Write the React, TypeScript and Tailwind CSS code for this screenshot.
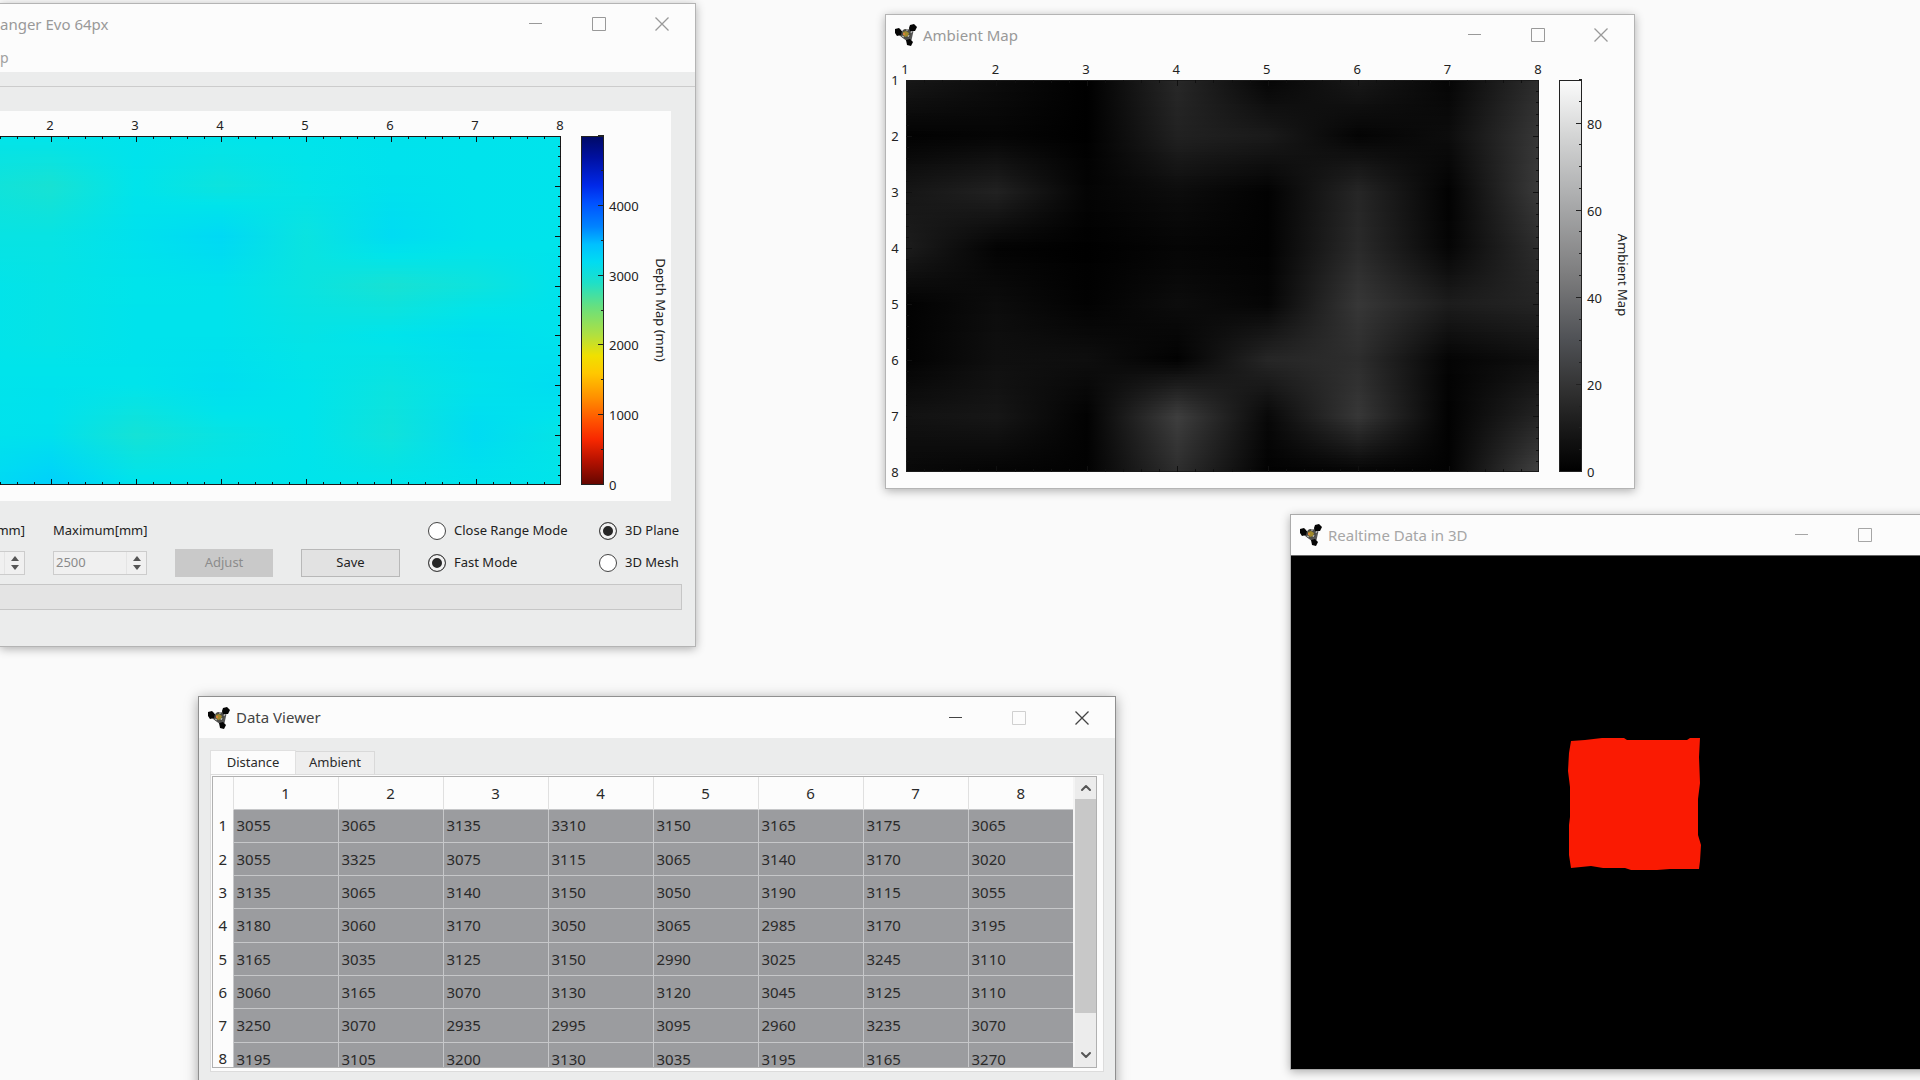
import React, { useState } from 'react';
import { ChevronDown, ChevronUp } from 'lucide-react';

const DISTANCES = [
  [3055, 3065, 3135, 3310, 3150, 3165, 3175, 3065],
  [3055, 3325, 3075, 3115, 3065, 3140, 3170, 3020],
  [3135, 3065, 3140, 3150, 3050, 3190, 3115, 3055],
  [3180, 3060, 3170, 3050, 3065, 2985, 3170, 3195],
  [3165, 3035, 3125, 3150, 2990, 3025, 3245, 3110],
  [3060, 3165, 3070, 3130, 3120, 3045, 3125, 3110],
  [3250, 3070, 2935, 2995, 3095, 2960, 3235, 3070],
  [3195, 3105, 3200, 3130, 3035, 3195, 3165, 3270],
];

const DEPTH = [
  [-0.1, 0, 0.1, 0, 0, 0.1, 0.1, 0],
  [-0.5, -0.9, 0, -0.5, -0.1, 0.2, 0.1, 0],
  [-0.3, -0.3, 0.2, 0.8, -0.4, 0.6, 0.1, 0],
  [0, -0.2, 0, 0.1, -0.4, -0.9, -0.5, 0.1],
  [0, -0.2, 0.1, 0.1, -0.2, 0, 0.4, 0.1],
  [0, 0.1, 0, 0.4, 0, -0.4, 0.1, 0.5],
  [0.1, 0.2, -0.8, -0.3, 0, -0.6, 0.6, -0.2],
  [0.4, 1.4, 0.1, 0, 0, 0, 0.1, 0],
];

const AMBIENT = [
  [24, 12, 0, 40, 5, 25, 5, 45],
  [2, 5, 0, 33, 26, 4, 12, 55],
  [22, 33, 4, 12, 2, 38, 2, 58],
  [28, 3, 0, 5, 2, 42, 5, 45],
  [2, 12, 2, 12, 5, 55, 28, 36],
  [2, 15, 14, 2, 38, 45, 4, 14],
  [18, 22, 2, 62, 8, 55, 2, 36],
  [8, 4, 2, 45, 2, 4, 2, 65],
];

const DEPTH_STOPS = [
  ['0%', '#000a66'],
  ['6%', '#0010a0'],
  ['14%', '#0028e8'],
  ['19%', '#0050ff'],
  ['26%', '#0084ff'],
  ['31%', '#00c0ff'],
  ['36%', '#00dcf2'],
  ['42%', '#1ee0c8'],
  ['49%', '#68e07e'],
  ['57%', '#b0e040'],
  ['63%', '#f0e000'],
  ['68%', '#ffc800'],
  ['75%', '#ff9000'],
  ['82%', '#ff5000'],
  ['87%', '#f82800'],
  ['93%', '#b81200'],
  ['100%', '#640600'],
];

const AMBIENT_STOPS = [
  ['0%', '#fbfbfb'],
  ['14%', '#d4d5d5'],
  ['30%', '#acadae'],
  ['50%', '#7c7c7d'],
  ['66%', '#505256'],
  ['80%', '#2f2f2f'],
  ['92%', '#121212'],
  ['100%', '#000000'],
];

const depthColor = (v: number) => {
  const near = Math.max(0, -v);
  const far = Math.max(0, v);
  return `rgb(${Math.round(26 * near)}, ${Math.round(228 - 3 * near - 14 * far)}, ${Math.round(235 - 27 * near + 12 * far)})`;
};

const grayColor = (v: number) => {
  const g = Math.round(v);
  return `rgb(${g}, ${g}, ${g})`;
};

const STRIP = 3;
const EIGHT = [1, 2, 3, 4, 5, 6, 7, 8];

interface MapChartProps {
  id: string;
  label: string;
  width: number;
  height: number;
  x0: number;
  x1: number;
  y0: number;
  y1: number;
  data: number[][];
  color: (v: number) => string;
  stops: string[][];
  barX: number;
  barWidth: number;
  max: number;
  step: number;
  minor: number;
  rowLabels?: boolean;
  labelX: number;
  labelY: number;
}

// Bilinear heat map: every strip is one horizontal gradient through its 8 columns
const MapChart: React.FC<MapChartProps> = (p) => {
  const w = p.x1 - p.x0;
  const h = p.y1 - p.y0;
  const strips = Array.from({ length: Math.ceil(h / STRIP) }, (_, i) => {
    const pos = Math.min(6.999, ((i * STRIP + STRIP / 2) / h) * 7);
    const r = Math.floor(pos);
    const t = pos - r;
    return p.data[r].map((v, c) => v * (1 - t) + p.data[r + 1][c] * t);
  });
  const ticks = Array.from({ length: 34 }, (_, i) => i + 1);
  const marks = Array.from({ length: Math.floor(p.max / p.minor) + 1 }, (_, i) => i * p.minor);
  const valueY = (v: number) => Math.round(p.y1 - (v / p.max) * h) - 0.5;

  return (
    <svg width={p.width} height={p.height} role="img" aria-label={p.label} className="block" fontSize="13" fill="#222">
      <defs>
        {strips.map((row, i) => (
          <linearGradient key={i} id={`${p.id}-${i}`}>
            {row.map((v, c) => (
              <stop key={c} offset={c / 7} stopColor={p.color(v)} />
            ))}
          </linearGradient>
        ))}
        <linearGradient id={`${p.id}-bar`} x1="0" y1="0" x2="0" y2="1">
          {p.stops.map(([offset, c]) => (
            <stop key={offset} offset={offset} stopColor={c} />
          ))}
        </linearGradient>
      </defs>
      <g shapeRendering="crispEdges">
        {strips.map((_, i) => (
          <rect key={i} x={p.x0} y={p.y0 + i * STRIP} width={w} height={Math.min(STRIP, h - i * STRIP)} fill={`url(#${p.id}-${i})`} />
        ))}
        <rect x={p.x0 + 0.5} y={p.y0 + 0.5} width={w - 1} height={h - 1} fill="none" stroke="#1a1a1a" />
        {ticks.map((i) => {
          const len = i % 5 === 0 ? 6 : 3;
          const x = Math.round(p.x0 + (i * w) / 35) + 0.5;
          const y = Math.round(p.y0 + (i * h) / 35) + 0.5;
          return (
            <path key={i} d={`M${x} ${p.y0}v${len}M${x} ${p.y1}v${-len}M${p.x1} ${y}h${-len}M${p.x0} ${y}h${len}`} stroke="#101010" fill="none" />
          );
        })}
        <rect x={p.barX + 0.5} y={p.y0 + 0.5} width={p.barWidth - 1} height={h - 1} fill={`url(#${p.id}-bar)`} stroke="#222" />
        {marks.map((v) => (
          <path key={v} d={`M${p.barX + p.barWidth} ${valueY(v)}h${v % p.step === 0 ? -6 : -3}`} stroke="#222" />
        ))}
      </g>
      {EIGHT.map((n) => (
        <text key={n} x={p.x0 + ((n - 1) * w) / 7 - 1} y={p.y0 - 6} textAnchor="middle">{n}</text>
      ))}
      {p.rowLabels && EIGHT.map((n) => (
        <text key={n} x={p.x0 - 11} y={p.y0 + ((n - 1) * h) / 7 + 5} textAnchor="middle">{n}</text>
      ))}
      {marks.filter((v) => v % p.step === 0 && v < p.max).map((v) => (
        <text key={v} x={p.barX + p.barWidth + 5} y={valueY(v) + 5}>{v}</text>
      ))}
      <text transform={`translate(${p.labelX} ${p.labelY}) rotate(90)`} textAnchor="middle">{p.label}</text>
    </svg>
  );
};

const Logo: React.FC = () => (
  <svg width="22" height="22" viewBox="0 0 22 22" aria-hidden="true" className="shrink-0">
    <path d="M5 8l6 2 5-5M11 10l3 8M5 10l8 6M17 7l-2 9" stroke="#555" strokeWidth="3" fill="none" />
    <circle cx="11" cy="10" r="5" fill="#4d4d48" />
    <path d="M0 5l4-1 3 3-1 4-4 1-2-3z" fill="#050505" />
    <path d="M15 1l4-1 3 3-2 4-5 0-1-3z" fill="#050505" />
    <path d="M11 16l4-1 3 3-2 4-4-1z" fill="#050505" />
    <path d="M8 8l3-1 3 2-1 3-3 1-2-2z" fill="#a08a2c" />
    <path d="M8 9h2v2h-2z" fill="#d9813a" />
    <path d="M11 6h2M14 11l-1 2M7 12l2 1M6 6l2 1M16 9l1-2" stroke="#c9c9c9" />
  </svg>
);

interface TitleBarProps {
  title: string;
  logo?: boolean;
  className?: string;
  color?: string;
  boxColor?: string;
}

const TitleBar: React.FC<TitleBarProps> = ({ title, logo = true, className = 'h-[41px]', color = 'text-[#999999]', boxColor = '' }) => (
  <header className={`flex shrink-0 items-center bg-[#fcfcfc] pr-0.5 ${className} ${color}`}>
    {logo && <Logo />}
    <h2 className={`flex-1 whitespace-nowrap text-[15px] ${logo ? 'ml-1.5' : ''}`}>{title}</h2>
    <div className="flex">
      <button type="button" aria-label="Minimize" className="flex w-[63px] items-center justify-center">
        <svg width="14" height="14" fill="none" stroke="currentColor"><path d="M0 6.5h13" /></svg>
      </button>
      <button type="button" aria-label="Maximize" className={`flex w-[63px] items-center justify-center ${boxColor}`}>
        <svg width="14" height="14" fill="none" stroke="currentColor"><path d="M.5 .5h13v13h-13z" /></svg>
      </button>
      <button type="button" aria-label="Close" className="flex w-[63px] items-center justify-center">
        <svg width="14" height="14" fill="none" stroke="currentColor" strokeWidth="1.3"><path d="M.5 .5l13 13M13.5 .5l-13 13" /></svg>
      </button>
    </div>
  </header>
);

const Spin: React.FC<{ label: string; value: string }> = ({ label, value }) => (
  <div className="flex h-6 w-[94px] shrink-0 border border-[#cccccc] bg-[#f0f0f0]">
    <input aria-label={label} defaultValue={value} disabled className="min-w-0 flex-1 pl-0.5 text-[13px] text-[#8a8a8a]" />
    <div className="flex w-5 flex-col items-center justify-center gap-1 border-l border-[#e4e4e4]">
      <button type="button" aria-label={`${label} up`}>
        <svg width="8" height="5" className="block" fill="#555"><path d="M0 5l4-5 4 5z" /></svg>
      </button>
      <button type="button" aria-label={`${label} down`}>
        <svg width="8" height="5" className="block" fill="#555"><path d="M0 0l4 5 4-5z" /></svg>
      </button>
    </div>
  </div>
);

interface RadioProps {
  name: string;
  label: string;
  checked: boolean;
  onChange: () => void;
}

const Radio: React.FC<RadioProps> = ({ name, label, checked, onChange }) => (
  <label className="flex items-center gap-2 whitespace-nowrap">
    <input
      type="radio"
      name={name}
      checked={checked}
      onChange={onChange}
      className="size-[18px] appearance-none rounded-full border border-[#444444] bg-white checked:bg-[#262626] checked:shadow-[inset_0_0_0_3px_#f2f2f2]"
    />
    {label}
  </label>
);

const MainWindow: React.FC = () => {
  const [mode, setMode] = useState('fast');
  const [view, setView] = useState('plane');

  return (
    <section className="absolute left-0 top-[3px] flex h-[644px] w-[696px] flex-col border border-l-0 border-[#b4b4b4] bg-[#ebecec] text-[13px] shadow-[0_2px_9px_rgba(0,0,0,0.3)]">
      <TitleBar title="anger Evo 64px" logo={false} className="h-10" />
      <nav className="flex h-7 shrink-0 items-center bg-[#fcfcfc]">
        <a href="#help" className="text-sm text-[#a0a0a0]">p</a>
      </nav>
      <div className="h-[15px] shrink-0 border-b border-[#cccccc]" />
      <div className="mr-6 mt-6 bg-[#fcfcfc]">
        <MapChart
          id="depth" label="Depth Map (mm)" width={671} height={390}
          x0={-34} x1={561} y0={25} y1={374} data={DEPTH} color={depthColor} stops={DEPTH_STOPS}
          barX={581} barWidth={23} max={5000} step={1000} minor={500} labelX={656} labelY={199}
        />
      </div>
      <div className="mt-[18px] grid grid-cols-[25px_94px_98px_99px_143px_1fr] grid-rows-[24px_28px] items-center gap-x-7 gap-y-1.5 text-[#222222]">
        <div className="flex justify-end">mm]</div>
        <div>Maximum[mm]</div>
        <div className="col-span-2" />
        <Radio name="mode" label="Close Range Mode" checked={mode === 'close'} onChange={() => setMode('close')} />
        <Radio name="view" label="3D Plane" checked={view === 'plane'} onChange={() => setView('plane')} />
        <div className="flex justify-end overflow-hidden"><Spin label="Minimum" value="" /></div>
        <Spin label="Maximum" value="2500" />
        <button type="button" disabled className="h-7 bg-[#c9c9c9] text-[#8c8c8c]">Adjust</button>
        <button type="button" className="h-7 border border-[#b8b8b8] bg-[#e2e2e2]">Save</button>
        <Radio name="mode" label="Fast Mode" checked={mode === 'fast'} onChange={() => setMode('fast')} />
        <Radio name="view" label="3D Mesh" checked={view === 'mesh'} onChange={() => setView('mesh')} />
      </div>
      <div role="progressbar" aria-label="Progress" aria-valuenow={0} className="mr-[13px] mt-[7px] h-[26px] border border-l-0 border-[#c6c6c6] bg-[#e4e4e4]" />
    </section>
  );
};

const AmbientWindow: React.FC = () => (
  <section className="absolute left-[885px] top-3.5 flex h-[475px] w-[750px] flex-col border border-[#b4b4b4] bg-[#fcfcfc] shadow-[0_2px_9px_rgba(0,0,0,0.3)]">
    <TitleBar title="Ambient Map" className="h-10 pl-[9px]" />
    <MapChart
      id="ambient" label="Ambient Map" width={747} height={433}
      x0={20} x1={653} y0={25} y1={417} data={AMBIENT} color={grayColor} stops={AMBIENT_STOPS}
      barX={673} barWidth={23} max={90} step={20} minor={5} rowLabels labelX={732} labelY={220}
    />
  </section>
);

const SceneWindow: React.FC = () => (
  <section className="absolute left-[1290px] top-[514px] flex h-[556px] w-[672px] flex-col border border-[#aaaaaa] bg-black shadow-[0_2px_9px_rgba(0,0,0,0.3)]">
    <TitleBar title="Realtime Data in 3D" className="h-10 pl-[9px]" color="text-[#a6a6a6]" />
    <div className="flex flex-1 items-start border-t border-[#666666] pl-[276px] pt-[181px]">
      <svg width="134" height="134" role="img" aria-label="3D point plane">
        <path d="M4 4L18 3 35 1H57L60 3H120L123 1H133L132 20 133 46 131 62 131 98 134 108 133 124 132 132H103L90 133H64L58 131H36L24 129 4 131 2 118 2 88 3 80 3 50 1 34 2 16z" fill="#fa1a02" />
      </svg>
    </div>
  </section>
);

const DataViewer: React.FC = () => {
  const [tab, setTab] = useState('distance');

  return (
    <section className="absolute left-[198px] top-[696px] flex h-[400px] w-[918px] flex-col border border-[#8f8f8f] bg-[#ebecec] text-[#2a2a2a] shadow-[0_2px_12px_rgba(0,0,0,0.35)]">
      <TitleBar title="Data Viewer" className="h-[41px] pl-[9px]" color="text-[#444444]" boxColor="text-[#d0d0d0]" />
      <div className="px-[11px] pt-3">
        <div role="tablist" className="flex items-end text-[13px]">
          <button type="button" role="tab" aria-selected={tab === 'distance'} onClick={() => setTab('distance')} className="h-6 w-[86px] border border-b-0 border-[#e0e0e0] bg-[#fcfcfc]">Distance</button>
          <button type="button" role="tab" aria-selected={tab === 'ambient'} onClick={() => setTab('ambient')} className="h-[23px] w-[79px] border border-b-0 border-l-0 border-[#d9d9d9] bg-[#eeeeee]">Ambient</button>
        </div>
        <div className="border border-[#dcdcdc] bg-[#fcfcfc] pb-[3px] pl-px pr-1.5 pt-px">
          <div className="flex h-[292px] overflow-hidden border border-[#b0b0b0]">
            <div className="flex-1 overflow-hidden">
              <table className="h-[298px] w-full table-fixed border-collapse text-[15px]">
                <thead>
                  <tr className="h-8">
                    <th className="w-5" />
                    {EIGHT.map((n) => (
                      <th key={n} scope="col" className="border-l border-[#e0e0e0] p-0 font-normal">{n}</th>
                    ))}
                  </tr>
                </thead>
                <tbody>
                  {DISTANCES.map((row, r) => (
                    <tr key={r}>
                      <th scope="row" className="p-0 font-normal">{r + 1}</th>
                      {row.map((v, c) => (
                        <td key={c} className="border border-b-0 border-r-0 border-[#c6c7c9] bg-[#9b9c9f] p-0 pl-[3px]">{v}</td>
                      ))}
                    </tr>
                  ))}
                </tbody>
              </table>
            </div>
            <div className="flex w-[23px] flex-col border-l-2 border-[#f4f4f4] bg-[#ececec] text-[#555555]">
              <button type="button" aria-label="Scroll up" className="flex h-[22px] items-center justify-center"><ChevronUp size={16} strokeWidth={3} /></button>
              <div className="h-[214px] bg-[#c8c8c8]" />
              <button type="button" aria-label="Scroll down" className="mt-auto flex h-6 items-center justify-center"><ChevronDown size={16} strokeWidth={3} /></button>
            </div>
          </div>
        </div>
      </div>
    </section>
  );
};

const App: React.FC = () => {
  return (
    <main className="relative h-screen overflow-hidden bg-[#fafafa] font-['Noto_Sans','Open_Sans',sans-serif]">
      <MainWindow />
      <AmbientWindow />
      <SceneWindow />
      <DataViewer />
    </main>
  );
};

export default App;
